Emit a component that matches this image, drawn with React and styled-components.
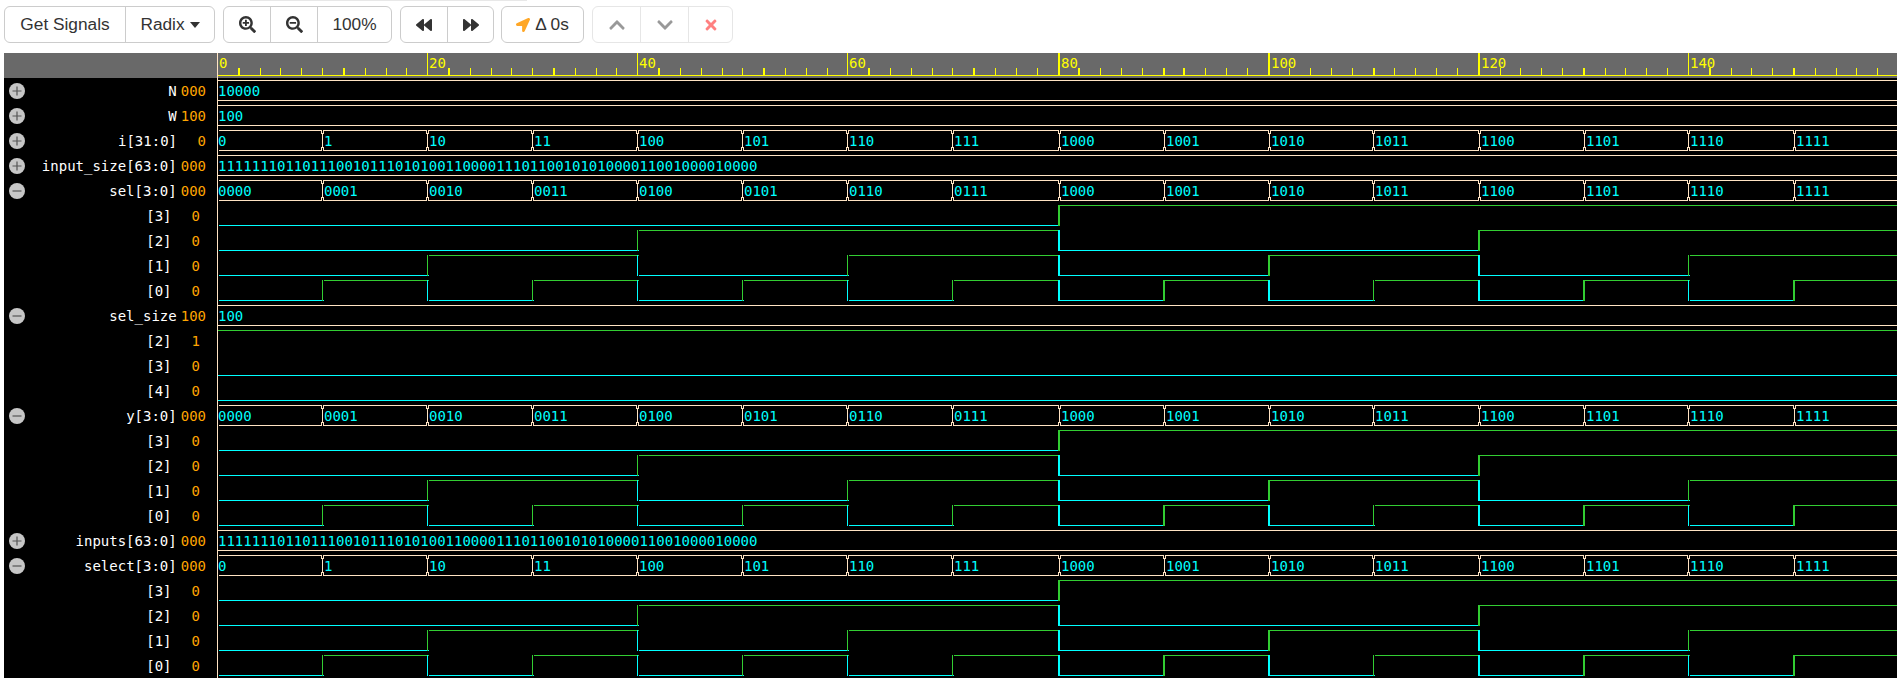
import React from "react";
import styled, { createGlobalStyle } from "styled-components";
import {
  FaSearchPlus,
  FaSearchMinus,
  FaBackward,
  FaForward,
  FaLocationArrow,
  FaChevronUp,
  FaChevronDown,
  FaTimes,
} from "react-icons/fa";

const MONO = `"DejaVu Sans Mono", "Liberation Mono", monospace`;
const ROW_H = 25;
const WAVE_TOP = 78;
const LINE = "#ffe4c4";
const LOW = "#00ffff";
const HIGH = "#32cd32";

const Global = createGlobalStyle`
  html, body {
    margin: 0;
    background: #fff;
    overflow: hidden;
  }
  body {
    font-family: "Liberation Sans", Arial, sans-serif;
  }
`;

const Page = styled.div`
  position: relative;
  height: 687px;
  padding: 6px 0 0 4px;
  box-sizing: border-box;
`;
const TopSliver = styled.div`
  position: absolute;
  top: 0;
  left: 250px;
  width: 277px;
  height: 1px;
  background: #e8e8e8;
`;
const Toolbar = styled.div`
  display: flex;
  height: 37px;
  margin-bottom: 10px;
`;
const Group = styled.div`
  display: flex;
  margin-right: ${(p) => p.$gap}px;
  border: 1px solid ${(p) => (p.$faded ? "#e6e6e6" : "#ccc")};
  border-radius: 6px;
  box-sizing: border-box;
`;
const Button = styled.div`
  display: flex;
  align-items: center;
  justify-content: center;
  gap: ${(p) => p.$iconGap || 0}px;
  width: ${(p) => p.$w}px;
  font-size: 17.3px;
  color: #333;
  border-left: ${(p) => (p.$first ? "none" : `1px solid ${p.$faded ? "#e6e6e6" : "#ccc"}`)};
  box-sizing: border-box;
`;
const Caret = styled.i`
  width: 0;
  height: 0;
  border-left: 5.5px solid transparent;
  border-right: 5.5px solid transparent;
  border-top: 6px solid #333;
`;

const Panel = styled.div`
  display: flex;
  height: 625px;
  background: #000;
`;
const Names = styled.div`
  width: 214px;
  flex: none;
  border-right: 1px solid ${LINE};
  box-sizing: border-box;
`;
const NamesHead = styled.div`
  height: ${ROW_H}px;
  background: #696969;
`;
const Row = styled.div`
  display: flex;
  align-items: center;
  height: ${ROW_H}px;
  padding: 0 ${(p) => (p.$bit ? 17 : 11)}px 0 5px;
  box-sizing: border-box;
  font: 14px/1 ${MONO};
`;
const Toggle = styled.svg`
  width: 16px;
  height: 16px;
  flex: none;
`;
const Name = styled.span`
  flex: 1;
  text-align: right;
  color: #fff;
  margin-right: ${(p) => (p.$bit ? 20 : 4)}px;
`;
const Value = styled.span`
  color: #ffa500;
  min-width: ${(p) => (p.$bit ? 8 : 25)}px;
  text-align: right;
`;
const Waves = styled.svg`
  display: block;
  flex: none;
  width: 1679px;
  height: 625px;
  shape-rendering: crispEdges;
`;
const BusValue = styled.text`
  font: 14px ${MONO};
  fill: ${LOW};
`;
const RulerLabel = styled.text`
  font: 14px ${MONO};
  fill: #ffff00;
`;

// pixel columns measured off the ruler, [x, width]
const TICKS = [
  [238, 2], [260, 1], [280, 1], [301, 1], [322, 1], [343, 2], [365, 1], [386, 1], [406, 1],
  [448, 2], [470, 1], [491, 1], [511, 1], [532, 1], [553, 2], [575, 1], [596, 1], [616, 1],
  [658, 2], [680, 1], [701, 1], [722, 1], [742, 1], [763, 2], [785, 1], [806, 1], [827, 1],
  [868, 2], [890, 1], [911, 1], [932, 1], [952, 1], [973, 2], [995, 1], [1016, 1], [1037, 1],
  [1078, 2], [1100, 1], [1121, 1], [1142, 1], [1163, 2], [1183, 2], [1205, 1], [1226, 1], [1247, 1],
  [1289, 1], [1310, 1], [1331, 1], [1352, 1], [1373, 2], [1394, 1], [1415, 1], [1436, 1], [1457, 1],
  [1500, 1], [1520, 1], [1541, 1], [1562, 1], [1583, 2], [1605, 1], [1625, 1], [1646, 1], [1667, 1],
  [1709, 2], [1731, 1], [1751, 1], [1772, 1], [1793, 2], [1815, 1], [1836, 1], [1856, 1], [1877, 1],
];
const MAJORS = [
  [218, 0, 0], [427, 1, 20], [637, 1, 40], [847, 1, 60], [1058, 2, 80],
  [1268, 2, 100], [1478, 2, 120], [1688, 1, 140],
];
// transition column for each 10 time units
const EDGES = [
  null, [322, 1], [427, 1], [532, 1], [637, 1], [742, 1], [847, 1], [952, 1],
  [1058, 2], [1163, 2], [1268, 2], [1373, 1], [1478, 2], [1583, 2], [1688, 1], [1793, 2],
];
const INPUT = "1111111011011100101110101001100001110110010101000011001000010000";
const bin = (n) => n.toString(2);
const bin4 = (n) => bin(n).padStart(4, "0");
const counting = (fmt) => EDGES.map((_, n) => fmt(n));

const bits = (k) => [
  { label: "[" + k + "]", val: "0", bit: k },
];
const group = () => [3, 2, 1, 0].flatMap(bits);

const ROWS = [
  { label: "N", val: "000", open: false, bus: ["10000"] },
  { label: "W", val: "100", open: false, bus: ["100"] },
  { label: "i[31:0]", val: "0", open: false, bus: counting(bin) },
  { label: "input_size[63:0]", val: "000", open: false, bus: [INPUT] },
  { label: "sel[3:0]", val: "000", open: true, bus: counting(bin4) },
  ...group(),
  { label: "sel_size", val: "100", open: true, bus: ["100"] },
  { label: "[2]", val: "1", level: 1 },
  { label: "[3]", val: "0", level: 0 },
  { label: "[4]", val: "0", level: 0 },
  { label: "y[3:0]", val: "000", open: true, bus: counting(bin4) },
  ...group(),
  { label: "inputs[63:0]", val: "000", open: false, bus: [INPUT] },
  { label: "select[3:0]", val: "000", open: true, bus: counting(bin) },
  ...group(),
];

const seg = (x1, x2, y) => `M${x1} ${y + 0.5}H${x2}`;
const vert = (x, y1, y2) => `M${x + 0.5} ${y1}V${y2}`;

function busPath(top, bottom, multi) {
  if (!multi) return seg(218, 1897, top) + seg(218, 1897, bottom);
  let d = "";
  let from = 219;
  EDGES.slice(1).forEach(([x, w]) => {
    const c = x + w - 1;
    d += seg(from, c, top) + seg(from, c, bottom);
    d += vert(c - 1, top, top + 4) + vert(c - 1, bottom - 3, bottom + 1);
    d += vert(c + 1, top, top + 4) + vert(c + 1, bottom - 3, bottom + 1);
    d += vert(c, top + 3, bottom - 2);
    from = c + 2;
  });
  return d + seg(from, 1897, top) + seg(from, 1897, bottom);
}

function bitPaths(k, high, low) {
  const out = [];
  EDGES.forEach((edge, n) => {
    const level = (n >> k) & 1;
    const start = edge ? edge[0] + 2 : 219;
    const next = EDGES[n + 1];
    const end = next ? next[0] + 2 : 1897;
    const nextLevel = (((n + 1) >> k) & 1);
    // same level carries through, drawn as one run per interval
    out.push(<path key={"h" + n} d={seg(start, end, level ? high : low)} stroke={level ? HIGH : LOW} />);
    if (next && nextLevel !== level) {
      const color = nextLevel ? HIGH : LOW;
      let v = "";
      for (let i = 0; i < next[1]; i++) v += vert(next[0] + i, high, low + 1);
      out.push(<path key={"v" + n} d={v} stroke={color} />);
    }
  });
  return out;
}

const Sign = ({ open }) => (
  <Toggle viewBox="0 0 16 16">
    <circle cx="8" cy="8" r="8" fill="#c6c6c6" />
    <path d={open ? "M3.5 8h9" : "M3.5 8h9M8 3.5v9"} stroke="#555" strokeWidth="1.2" shapeRendering="auto" />
  </Toggle>
);

const Ruler = () => (
  <g>
    <rect x="218" y="53" width="1679" height="25" fill="#696969" />
    <rect x="218" y="75" width="1679" height="1" fill="#ffff00" />
    {TICKS.map(([x, w]) => (
      <rect key={x} x={x} y="68" width={w} height="7" fill="#ffff00" />
    ))}
    {MAJORS.map(([x, w, t]) => (
      <React.Fragment key={t}>
        {w > 0 && <rect x={x} y="53" width={w} height="22" fill="#ffff00" />}
        <RulerLabel x={x + w + 1} y="68">{t}</RulerLabel>
      </React.Fragment>
    ))}
  </g>
);

const WaveRow = ({ row, index }) => {
  const top = WAVE_TOP + index * ROW_H + 2;
  const bottom = top + 20;
  if (row.bus) {
    const multi = row.bus.length > 1;
    return (
      <g>
        <path d={busPath(top, bottom, multi)} stroke={LINE} fill="none" />
        {row.bus.map((text, n) => (
          <BusValue key={n} x={n === 0 ? 218 : EDGES[n][0] + EDGES[n][1] + 1} y={top + 16}>
            {text}
          </BusValue>
        ))}
      </g>
    );
  }
  if (row.level !== undefined) {
    return (
      <path
        d={seg(218, 1897, row.level ? top : bottom)}
        stroke={row.level ? HIGH : LOW}
      />
    );
  }
  return <g fill="none">{bitPaths(row.bit, top, bottom)}</g>;
};

export default function App() {
  return (
    <Page>
      <Global />
      <TopSliver />
      <Toolbar>
        <Group $gap={8}>
          <Button $first $w={120}>Get Signals</Button>
          <Button $w={89} $iconGap={5}>Radix <Caret /></Button>
        </Group>
        <Group $gap={8}>
          <Button $first $w={46}><FaSearchPlus size={17} /></Button>
          <Button $w={47}><FaSearchMinus size={17} /></Button>
          <Button $w={74}>100%</Button>
        </Group>
        <Group $gap={7}>
          <Button $first $w={46}><FaBackward size={16} /></Button>
          <Button $w={46}><FaForward size={16} /></Button>
        </Group>
        <Group $gap={8}>
          <Button $first $w={81} $iconGap={5}>
            <FaLocationArrow size={14} color="#ffa726" /> Δ 0s
          </Button>
        </Group>
        <Group $gap={0} $faded>
          <Button $first $faded $w={47}><FaChevronUp size={18} color="#999" /></Button>
          <Button $faded $w={48}><FaChevronDown size={18} color="#999" /></Button>
          <Button $faded $w={44}><FaTimes size={16} color="#ff8080" /></Button>
        </Group>
      </Toolbar>
      <Panel>
        <Names>
          <NamesHead />
          {ROWS.map((row, i) => {
            const isBit = row.bit !== undefined || row.level !== undefined;
            return (
              <Row key={i} $bit={isBit}>
                {row.open !== undefined && <Sign open={row.open} />}
                <Name $bit={isBit}>{row.label}</Name>
                <Value $bit={isBit}>{row.val}</Value>
              </Row>
            );
          })}
        </Names>
        <Waves viewBox="218 53 1679 625">
          <Ruler />
          {ROWS.map((row, i) => (
            <WaveRow key={i} row={row} index={i} />
          ))}
        </Waves>
      </Panel>
    </Page>
  );
}
